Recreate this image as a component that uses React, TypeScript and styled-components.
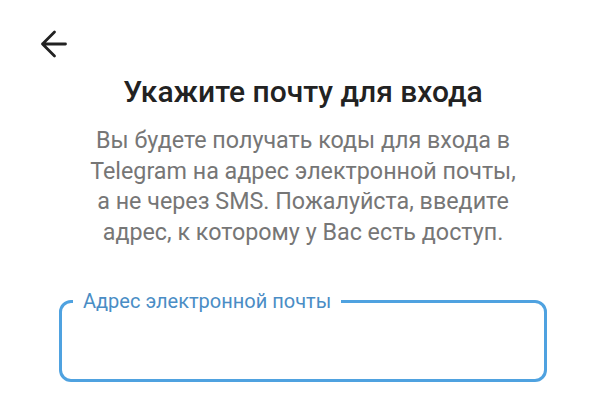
import styled, { createGlobalStyle } from "styled-components";

const GlobalStyle = createGlobalStyle`
  body {
    margin: 0;
    background: #ffffff;
    font-family: Roboto, "Noto Sans", sans-serif;
  }
`;

const Screen = styled.div`
  width: 606px;
  height: 420px;
  overflow: hidden;
  display: flex;
  flex-direction: column;
`;

const TopBar = styled.div`
  height: 64px;
  padding: 24px 0 0 34px;
  box-sizing: border-box;
`;

const BackButton = styled.button`
  width: 40px;
  height: 40px;
  padding: 0;
  border: none;
  background: none;
  display: block;
  color: #222222;
`;

const Content = styled.div`
  display: flex;
  flex-direction: column;
  align-items: center;
  margin-top: 10px;
`;

const Title = styled.h1`
  margin: 0;
  font-size: 30px;
  line-height: 35px;
  font-weight: 500;
  color: #222222;
`;

const Description = styled.p`
  margin: 16px 0 0;
  width: 432px;
  font-size: 23.3px;
  line-height: 30.6px;
  color: #767676;
  text-align: center;
`;

const Field = styled.fieldset`
  margin: 44px 0 0;
  width: 488px;
  height: 91px;
  box-sizing: border-box;
  border: 3px solid #4fa2e0;
  border-radius: 12px;
  padding: 0 0 0 11px;
`;

const FieldLabel = styled.legend`
  padding: 0 10px;
  font-size: 20px;
  line-height: 20px;
  color: #4a8dc5;
`;

export default function App() {
  return (
    <>
      <GlobalStyle />
      <Screen>
        <TopBar>
          <BackButton aria-label="Назад">
            <svg width="40" height="40" viewBox="0 0 40 40" fill="none">
              <path
                d="M31.5 20H8.5M20.5 8L8.5 20L20.5 32"
                stroke="currentColor"
                strokeWidth="2.8"
                strokeLinecap="round"
                strokeLinejoin="round"
              />
            </svg>
          </BackButton>
        </TopBar>
        <Content>
          <Title>Укажите почту для входа</Title>
          <Description>
            Вы будете получать коды для входа в Telegram на адрес электронной
            почты, а не через SMS. Пожалуйста, введите адрес, к которому у Вас
            есть доступ.
          </Description>
          <Field>
            <FieldLabel>Адрес электронной почты</FieldLabel>
          </Field>
        </Content>
      </Screen>
    </>
  );
}
